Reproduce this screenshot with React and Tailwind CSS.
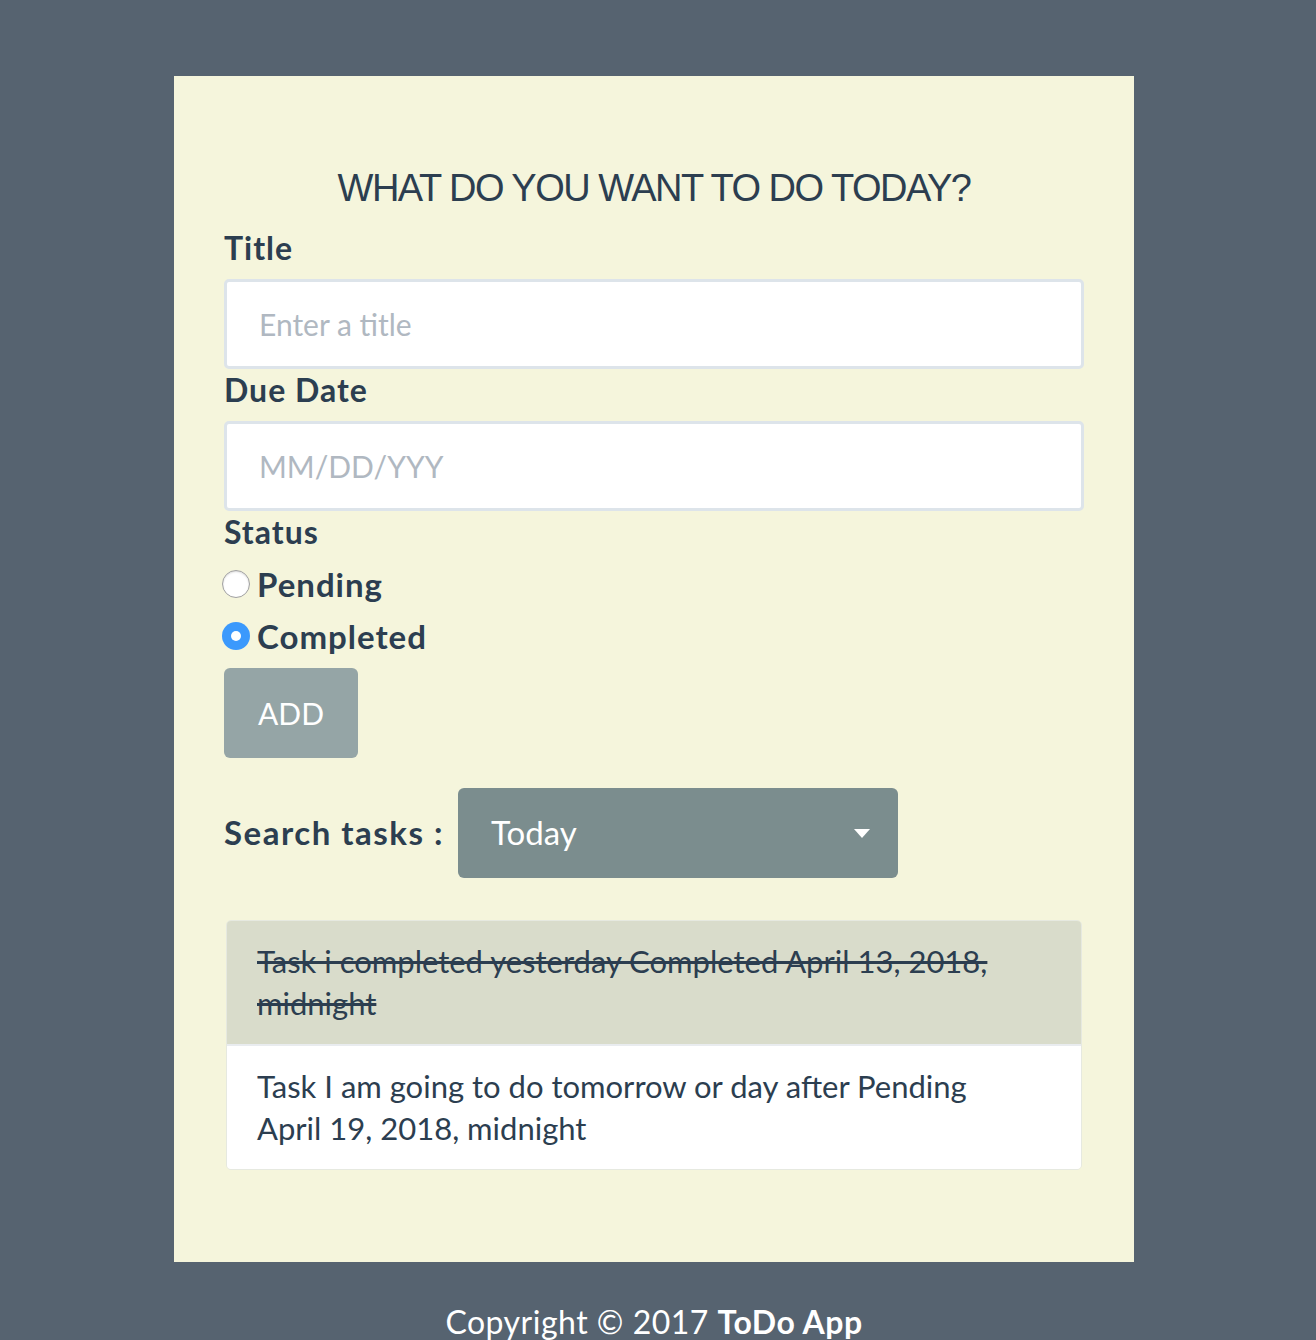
export default function App() {
  const f = { fontFamily: 'Lato, "Noto Sans", sans-serif' };
  return (
    <div className="min-h-[1340px] bg-[#566370] pt-[76px] text-[#2c3e50]" style={f}>
      <div className="ml-[174px] w-[960px] bg-[#f5f5dc] px-[50px] pt-[92px] pb-[92px]">
        <h1 className="text-center text-[38px] leading-[40px] tracking-[-1.5px] text-[#2c3e50]" style={{ fontFamily: '"Liberation Sans", Arial, sans-serif' }}>
          WHAT DO YOU WANT TO DO TODAY?
        </h1>
        <label className="mt-[22px] block text-[32px] font-bold leading-[36px] tracking-[1px]">Title</label>
        <div className="mt-[13px] flex h-[90px] items-center rounded-[5px] border-[3px] border-[#dde4ea] bg-white px-[32px] text-[30px] text-[#b0b8c1]">
          Enter a title
        </div>
        <label className="mt-[3px] block text-[32px] font-bold leading-[36px] tracking-[1px]">Due Date</label>
        <div className="mt-[13px] flex h-[90px] items-center rounded-[5px] border-[3px] border-[#dde4ea] bg-white px-[32px] text-[30px] text-[#b0b8c1]">
          MM/DD/YYY
        </div>
        <label className="mt-[3px] block text-[32px] font-bold leading-[36px] tracking-[1px]">Status</label>
        <div className="mt-[16px] flex items-center gap-[7px] leading-[36px]">
          <span className="ml-[-2px] h-[28px] w-[28px] rounded-full border border-[#a0a0a0] bg-white shadow-[inset_0_1px_2px_rgba(0,0,0,0.15)]" />
          <span className="text-[33px] font-bold tracking-[1px]">Pending</span>
        </div>
        <div className="mt-[16px] flex items-center gap-[7px] leading-[36px]">
          <span className="ml-[-2px] flex h-[28px] w-[28px] items-center justify-center rounded-full bg-[#3b99fc]">
            <span className="h-[10px] w-[10px] rounded-full bg-white" />
          </span>
          <span className="text-[33px] font-bold tracking-[1px]">Completed</span>
        </div>
        <button className="mt-[14px] flex h-[90px] w-[134px] items-center justify-center rounded-[6px] bg-[#95a5a6] text-[30px] text-white">
          ADD
        </button>
        <div className="mt-[30px] flex items-center gap-[14px]">
          <span className="text-[33px] font-bold tracking-[1.5px]">Search tasks :</span>
          <div className="flex h-[90px] w-[440px] items-center justify-between rounded-[6px] bg-[#7b8d8e] pl-[33px] pr-[28px] text-[33px] text-white">
            <span>Today</span>
            <svg width="16" height="9" viewBox="0 0 16 9"><path d="M0 0h16L8 9z" fill="white" /></svg>
          </div>
        </div>
        <ul className="mx-[2px] mt-[42px] overflow-hidden rounded-[5px] border border-[#e6e9e0] text-[31px] leading-[42px]">
          <li className="bg-[#d9dccb] pl-[30px] pr-[70px] pt-[19px] pb-[20px] line-through">
            Task i completed yesterday Completed April 13, 2018, midnight
          </li>
          <li className="border-t-2 border-[#e9ecef] bg-white pl-[30px] pr-[70px] pt-[19px] pb-[20px]">
            Task I am going to do tomorrow or day after Pending April 19, 2018, midnight
          </li>
        </ul>
      </div>
      <div className="ml-[174px] w-[960px] pt-[42px] text-center text-[32px] leading-[36px] tracking-[0.5px] text-white">
        Copyright © 2017 <span className="font-bold">ToDo App</span>
      </div>
    </div>
  );
}
